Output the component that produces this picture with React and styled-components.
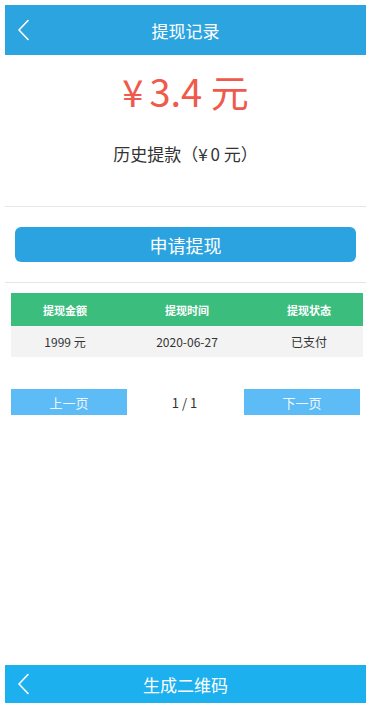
import React from 'react';
import styled, { createGlobalStyle } from 'styled-components';

const GlobalStyle = createGlobalStyle`
  html, body {
    margin: 0;
    padding: 0;
    background: #ffffff;
  }
  body {
    font-family: "Noto Sans CJK SC", "Noto Sans", sans-serif;
    color: #333333;
  }
`;

const Page = styled.div`
  width: 372px;
  min-height: 708px;
  display: flex;
  flex-direction: column;
  padding: 5px 6px 5px 5px;
  box-sizing: border-box;
`;

const Bar = styled.div`
  position: relative;
  height: ${({ $h }) => $h}px;
  background: ${({ $bg }) => $bg};
  display: flex;
  align-items: center;
  justify-content: center;
  color: #ffffff;
  font-size: 17px;
  flex-shrink: 0;
`;

const BackIcon = styled.svg`
  position: absolute;
  left: 12px;
  top: 50%;
  transform: translateY(-50%);
`;

const Amount = styled.div`
  margin-top: 13px;
  text-align: center;
  font-size: 38px;
  line-height: 46px;
  color: #ef5a4c;
`;

const Yen = styled.span`
  margin-right: ${({ $gap }) => $gap}px;
`;

const History = styled.div`
  margin-top: 27px;
  text-align: center;
  font-size: 17px;
  line-height: 26px;
  color: #333333;
`;

const Divider = styled.div`
  height: 1px;
  background: #e6e6e6;
  margin-top: ${({ $top }) => $top}px;
`;

const ApplyButton = styled.button`
  margin: 20px 10px 0 10px;
  height: 35px;
  border: none;
  border-radius: 6px;
  background: #2ba3e1;
  color: #ffffff;
  font-family: inherit;
  font-size: 18px;
  padding: 0;
`;

const Table = styled.div`
  margin: 10px 3px 0 6px;
  display: grid;
  grid-template-columns: 108px 136px 108px;
`;

const HeadCell = styled.div`
  height: 33px;
  background: #3bbd7d;
  color: #ffffff;
  font-size: 11px;
  font-weight: 700;
  display: flex;
  align-items: center;
  justify-content: center;
`;

const Cell = styled.div`
  height: 31px;
  background: #f3f3f3;
  color: #333333;
  font-size: 12px;
  display: flex;
  align-items: center;
  justify-content: center;
`;

const Pager = styled.div`
  margin: 32px 6px 0 6px;
  display: flex;
  align-items: center;
  justify-content: space-between;
`;

const PageButton = styled.button`
  width: 116px;
  height: 26px;
  border: none;
  background: #5dbbf6;
  color: #eef7ff;
  font-family: inherit;
  font-size: 13px;
  padding: 0;
`;

const PageInfo = styled.span`
  font-size: 13px;
  color: #333333;
  margin-left: -2px;
`;

const Spacer = styled.div`
  flex: 1;
`;

const Back = () => (
  <BackIcon width="14" height="22" viewBox="0 0 14 22">
    <polyline
      points="11,1.5 2,11 11,20.5"
      fill="none"
      stroke="#ffffff"
      strokeWidth="1.6"
      strokeLinecap="round"
      strokeLinejoin="round"
    />
  </BackIcon>
);

const rows = [{ amount: '1999 元', time: '2020-06-27', status: '已支付' }];

export default function App() {
  return (
    <>
      <GlobalStyle />
      <Page>
        <Bar $h={50} $bg="#2ba4e0">
          <Back />
          提现记录
        </Bar>
        <Amount>
          <Yen $gap={6}>¥</Yen>3.4 元
        </Amount>
        <History>
          历史提款（<Yen $gap={3}>¥</Yen>0 元）
        </History>
        <Divider $top={39} />
        <ApplyButton>申请提现</ApplyButton>
        <Divider $top={20} />
        <Table>
          <HeadCell>提现金额</HeadCell>
          <HeadCell>提现时间</HeadCell>
          <HeadCell>提现状态</HeadCell>
          {rows.map((r) => (
            <React.Fragment key={r.time}>
              <Cell>{r.amount}</Cell>
              <Cell>{r.time}</Cell>
              <Cell>{r.status}</Cell>
            </React.Fragment>
          ))}
        </Table>
        <Pager>
          <PageButton>上一页</PageButton>
          <PageInfo>1 / 1</PageInfo>
          <PageButton>下一页</PageButton>
        </Pager>
        <Spacer />
        <Bar $h={38} $bg="#1cb0ef">
          <Back />
          生成二维码
        </Bar>
      </Page>
    </>
  );
}
